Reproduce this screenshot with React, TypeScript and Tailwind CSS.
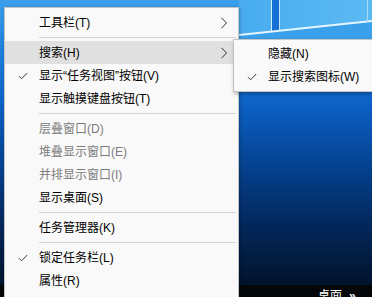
import React from 'react';

type Item =
  | { kind: 'sep' }
  | {
      kind: 'item';
      label: string;
      sub?: boolean;
      active?: boolean;
      checked?: boolean;
      disabled?: boolean;
    };

const menu: Item[] = [
  { kind: 'item', label: '工具栏(T)', sub: true },
  { kind: 'sep' },
  { kind: 'item', label: '搜索(H)', sub: true, active: true },
  { kind: 'item', label: '显示“任务视图”按钮(V)', checked: true },
  { kind: 'item', label: '显示触摸键盘按钮(T)' },
  { kind: 'sep' },
  { kind: 'item', label: '层叠窗口(D)', disabled: true },
  { kind: 'item', label: '堆叠显示窗口(E)', disabled: true },
  { kind: 'item', label: '并排显示窗口(I)', disabled: true },
  { kind: 'item', label: '显示桌面(S)' },
  { kind: 'sep' },
  { kind: 'item', label: '任务管理器(K)' },
  { kind: 'sep' },
  { kind: 'item', label: '锁定任务栏(L)', checked: true },
  { kind: 'item', label: '属性(R)' },
];

const subMenu: Item[] = [
  { kind: 'item', label: '隐藏(N)' },
  { kind: 'item', label: '显示搜索图标(W)', checked: true },
];

const font = { fontFamily: '"Liberation Sans", "Noto Sans CJK SC", sans-serif' };

function Check() {
  return (
    <svg width="10" height="8" viewBox="0 0 10 8" className="absolute left-[13px]">
      <path d="M1 4.2 L3.6 6.8 L9.2 1" fill="none" stroke="#3a3a3a" strokeWidth="1" />
    </svg>
  );
}

function Chevron() {
  return (
    <svg width="8" height="12" viewBox="0 0 8 12" className="ml-auto mr-[10px]">
      <path d="M1.5 0.8 L6.5 6 L1.5 11.2" fill="none" stroke="#333" strokeWidth="1" />
    </svg>
  );
}

function MenuList({ items }: { items: Item[] }) {
  return (
    <>
      {items.map((it, i) =>
        it.kind === 'sep' ? (
          <div key={i} className="h-[7px] flex items-center pl-[34px] pr-[2px]">
            <div className="h-px w-full bg-[#d4d4d4]" />
          </div>
        ) : (
          <div
            key={i}
            className={
              'relative flex items-center h-[23px] pl-[34px] text-[12px] ' +
              (it.active ? 'bg-[#e0e0e0] ' : '') +
              (it.disabled ? 'text-[#7c7c7c]' : 'text-black')
            }
          >
            {it.checked && <Check />}
            <span className="whitespace-nowrap">{it.label}</span>
            {it.sub && <Chevron />}
          </div>
        )
      )}
    </>
  );
}

function Wallpaper() {
  return (
    <svg width="372" height="285" viewBox="0 0 372 285" className="block">
      <defs>
        <linearGradient id="bg" x1="0" y1="0" x2="0" y2="1">
          <stop offset="0" stopColor="#3c9fea" />
          <stop offset="0.18" stopColor="#1d7fdc" />
          <stop offset="0.38" stopColor="#0b5fc2" />
          <stop offset="0.58" stopColor="#054290" />
          <stop offset="0.8" stopColor="#032659" />
          <stop offset="1" stopColor="#01132c" />
        </linearGradient>
        <linearGradient id="sky" x1="0" y1="0" x2="1" y2="0">
          <stop offset="0" stopColor="#48acef" />
          <stop offset="1" stopColor="#5cbaf3" />
        </linearGradient>
      </defs>
      <rect width="372" height="285" fill="url(#bg)" />
      <polygon points="239,0 372,0 372,21 239,35" fill="url(#sky)" />
      <polygon points="239,35 372,21 372,40 239,40" fill="#3aa0ea" />
      <rect x="272" y="0" width="7" height="32" fill="#1470d2" />
      <line x1="271.5" y1="0" x2="271.5" y2="32" stroke="#d6efff" strokeWidth="1" />
      <line x1="279.5" y1="0" x2="279.5" y2="31" stroke="#bfe4fb" strokeWidth="1" />
      <line x1="239" y1="35" x2="372" y2="21" stroke="#e4f5ff" strokeWidth="2" />
      <line x1="367.5" y1="0" x2="367.5" y2="22" stroke="#a8dcfa" strokeWidth="1" />
    </svg>
  );
}

export default function App() {
  return (
    <div className="relative w-[372px] h-[297px] overflow-hidden bg-black" style={font}>
      <div className="flex flex-col">
        <Wallpaper />
        <div className="h-[12px] bg-[#050607] flex items-start pl-[318px] pt-[5px] gap-[7px] text-white text-[12px] leading-[12px]">
          <span>桌面</span>
          <span className="font-bold">»</span>
        </div>
      </div>

      {/* main context menu */}
      <div className="absolute left-[4px] top-[7px] w-[235px] h-[300px] bg-[#f9f9f9] border border-[#c4c4c4] pt-[3px] shadow-[1px_1px_3px_rgba(0,0,0,0.25)]">
        <MenuList items={menu} />
      </div>

      {/* search submenu */}
      <div className="absolute left-[233px] top-[39px] w-[160px] bg-[#f9f9f9] border border-[#c4c4c4] pt-[2px] pb-[3px] shadow-[1px_2px_4px_rgba(0,0,0,0.3)]">
        <MenuList items={subMenu} />
      </div>
    </div>
  );
}
